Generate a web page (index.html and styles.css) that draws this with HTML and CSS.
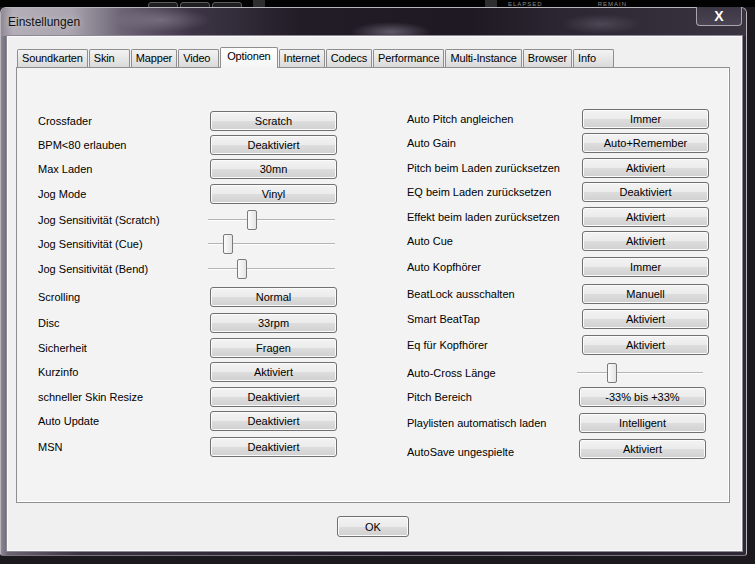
FILE: index.html
```html
<!DOCTYPE html>
<html>
  <head>
    <meta http-equiv="Content-Type" content="text/html; charset=UTF-8">
    <title>Einstellungen</title>
    <link rel="stylesheet" href="styles.css">
  </head>
  <body>

    <div class="desk-top">
      <div class="deck-btns"><span></span><span></span><span></span></div>
      <div class="deck-sep"></div>
      <div class="deck-sep deck-sep2"></div>
      <span class="deck-lbl">ELAPSED</span>
      <span class="deck-lbl deck-remain">REMAIN</span>
    </div>

    <div class="window">
      <div class="titlebar">
        <span class="title">Einstellungen</span>
        <span class="close">X</span>
      </div>

      <div class="client">
        <div class="tabs">
          <div class="tab">Soundkarten</div>
          <div class="tab">Skin</div>
          <div class="tab">Mapper</div>
          <div class="tab">Video</div>
          <div class="tab active">Optionen</div>
          <div class="tab">Internet</div>
          <div class="tab">Codecs</div>
          <div class="tab">Performance</div>
          <div class="tab">Multi-Instance</div>
          <div class="tab">Browser</div>
          <div class="tab">Info</div>
        </div>

        <div class="panel">
          <!-- linke Spalte -->
          <div class="col col-left">
            <div class="opt"><span class="lbl">Crossfader</span><button class="btn">Scratch</button></div>
            <div class="opt"><span class="lbl">BPM&lt;80 erlauben</span><button class="btn">Deaktiviert</button></div>
            <div class="opt"><span class="lbl">Max Laden</span><button class="btn">30mn</button></div>
            <div class="opt"><span class="lbl">Jog Mode</span><button class="btn">Vinyl</button></div>
            <div class="opt"><span class="lbl">Jog Sensitivität (Scratch)</span>
              <div class="slider"><span class="thumb" style="left: 39px"></span></div></div>
            <div class="opt"><span class="lbl">Jog Sensitivität (Cue)</span>
              <div class="slider"><span class="thumb" style="left: 15px"></span></div></div>
            <div class="opt"><span class="lbl">Jog Sensitivität (Bend)</span>
              <div class="slider"><span class="thumb" style="left: 29px"></span></div></div>
            <div class="opt"><span class="lbl">Scrolling</span><button class="btn">Normal</button></div>
            <div class="opt"><span class="lbl">Disc</span><button class="btn">33rpm</button></div>
            <div class="opt"><span class="lbl">Sicherheit</span><button class="btn">Fragen</button></div>
            <div class="opt"><span class="lbl">Kurzinfo</span><button class="btn">Aktiviert</button></div>
            <div class="opt"><span class="lbl">schneller Skin Resize</span><button class="btn">Deaktiviert</button></div>
            <div class="opt"><span class="lbl">Auto Update</span><button class="btn">Deaktiviert</button></div>
            <div class="opt"><span class="lbl">MSN</span><button class="btn">Deaktiviert</button></div>
          </div>

          <!-- rechte Spalte -->
          <div class="col col-right">
            <div class="opt"><span class="lbl">Auto Pitch angleichen</span><button class="btn">Immer</button></div>
            <div class="opt"><span class="lbl">Auto Gain</span><button class="btn">Auto+Remember</button></div>
            <div class="opt"><span class="lbl">Pitch beim Laden zurücksetzen</span><button class="btn">Aktiviert</button></div>
            <div class="opt"><span class="lbl">EQ beim Laden zurücksetzen</span><button class="btn">Deaktiviert</button></div>
            <div class="opt"><span class="lbl">Effekt beim laden zurücksetzen</span><button class="btn">Aktiviert</button></div>
            <div class="opt"><span class="lbl">Auto Cue</span><button class="btn">Aktiviert</button></div>
            <div class="opt"><span class="lbl">Auto Kopfhörer</span><button class="btn">Immer</button></div>
            <div class="opt"><span class="lbl">BeatLock ausschalten</span><button class="btn">Manuell</button></div>
            <div class="opt"><span class="lbl">Smart BeatTap</span><button class="btn">Aktiviert</button></div>
            <div class="opt"><span class="lbl">Eq für Kopfhörer</span><button class="btn">Aktiviert</button></div>
            <div class="opt"><span class="lbl">Auto-Cross Länge</span>
              <div class="slider slider-r"><span class="thumb" style="left: 30px"></span></div></div>
            <div class="opt"><span class="lbl">Pitch Bereich</span><button class="btn shift">-33% bis +33%</button></div>
            <div class="opt"><span class="lbl">Playlisten automatisch laden</span><button class="btn shift">Intelligent</button></div>
            <div class="opt"><span class="lbl lbl-low">AutoSave ungespielte</span><button class="btn shift">Aktiviert</button></div>
          </div>
        </div>

        <div class="footer">
          <button class="btn btn-ok">OK</button>
        </div>
      </div>
    </div>

  </body>
</html>
```

FILE: styles.css
```css
body {
  margin: 0;
  width: 755px;
  height: 564px;
  overflow: hidden;
  background: #1b191d;
  font-family: "Liberation Sans", Arial, sans-serif;
  font-size: 11px;
  color: #000;
}

/* Streifen der Anwendung hinter dem Fenster */
.desk-top {
  height: 7px;
  background: #030303;
  display: flex;
  overflow: hidden;
}

.deck-btns {
  display: flex;
  gap: 2px;
  margin-left: 148px;
}

.deck-btns span {
  width: 28px;
  height: 10px;
  margin-top: 2px;
  border: 1px solid #5c5c5c;
  border-radius: 3px;
  background: #1e1e1e;
}

.deck-sep {
  width: 12px;
  margin-left: 11px;
  background: #2e2e2e;
}

.deck-sep2 {
  margin-left: 220px;
}

.deck-lbl {
  margin-left: 11px;
  margin-top: 1px;
  color: #8a8a8a;
  font-size: 6px;
  line-height: 6px;
  letter-spacing: 1px;
}

.deck-remain {
  margin-left: 55px;
}

/* Fenster */
.window {
  width: 747px;
  height: 549px;
  box-sizing: border-box;
  border: 1px solid #b9b5bd;
  border-bottom-color: #7a7480;
  border-radius: 6px 6px 3px 3px;
  background: linear-gradient(90deg, #8d8693 0, #6b6371 7px, #3a3240 80px, #241e2a 400px, #2e2834 100%);
  display: flex;
  flex-direction: column;
}

.titlebar {
  height: 28px;
  display: flex;
  justify-content: space-between;
  align-items: flex-start;
  border-radius: 5px 5px 0 0;
  background:
    radial-gradient(ellipse 40px 10px at 390px 24px, rgba(150, 140, 160, .55), rgba(150, 140, 160, 0)),
    radial-gradient(ellipse 50px 12px at 160px 12px, rgba(150, 140, 160, .5), rgba(150, 140, 160, 0)),
    radial-gradient(ellipse 40px 10px at 600px 16px, rgba(120, 110, 130, .4), rgba(120, 110, 130, 0)),
    linear-gradient(90deg, #8f8995 0, #b3aeb7 12px, #a9a4ae 70px, #6d6575 120px, #3e3646 190px, #221c26 300px, #1f1923 470px, #2c2632 560px, #3a3440 100%);
}

.title {
  padding-left: 7px;
  font-size: 12px;
  line-height: 28px;
  color: #111;
  text-shadow: 0 0 6px rgba(255, 255, 255, .5);
}

.close {
  width: 46px;
  height: 19px;
  box-sizing: border-box;
  margin-top: -1px;
  margin-right: 4px;
  border: 1px solid #a9a4ae;
  border-top: none;
  border-radius: 0 0 4px 4px;
  background: linear-gradient(#3d3644, #4a4352);
  color: #fff;
  font-weight: bold;
  font-size: 14px;
  line-height: 19px;
  text-align: center;
}

.client {
  flex: 1;
  margin: 0 4px 4px 6px;
  padding: 11px 0 0 9px;
  background: #f0f0f0;
  box-shadow: inset 0 0 0 1px #fafafa, 0 0 0 1px #8e8896;
}

/* Reiter */
.tabs {
  display: flex;
  align-items: flex-end;
  height: 20px;
  padding-left: 1px;
}

.tab {
  height: 18px;
  min-width: 41px;
  box-sizing: border-box;
  padding: 0 4px;
  margin-right: 1px;
  border: 1px solid #8e8e8e;
  border-bottom: none;
  border-radius: 2px 2px 0 0;
  background: linear-gradient(#f3f3f3, #dadada);
  line-height: 17px;
  letter-spacing: -0.15px;
  white-space: nowrap;
}

.tab.active {
  height: 21px;
  margin-bottom: -1px;
  padding: 0 6px;
  position: relative;
  z-index: 1;
  background: linear-gradient(#ffffff, #f4f4f4);
}

.panel {
  width: 714px;
  height: 436px;
  box-sizing: border-box;
  border: 1px solid #8e8f8f;
  background: #f3f3f3;
  box-shadow: inset -1px -1px 0 #fff;
  display: flex;
}

.col {
  display: grid;
  align-content: start;
}

.col-left {
  width: 369px;
  margin-left: 21px;
  padding-top: 43px;
  grid-template-rows: 24px 24px 25px 26px 24px 25px 28px 26px 25px 24px 25px 24px 26px 20px;
}

.col-right {
  padding-top: 41px;
  grid-template-rows: 24px 25px 24px 25px 24px 26px 27px 25px 26px 28px 24px 26px 26px 20px;
}

.opt {
  display: flex;
  align-items: center;
  height: 20px;
}

.lbl {
  width: 172px;
  flex: none;
  white-space: nowrap;
}

.col-right .lbl {
  width: 175px;
}

.lbl-low {
  padding-top: 6px;
}

.btn {
  width: 127px;
  height: 20px;
  box-sizing: border-box;
  padding: 0;
  border: 1px solid #707070;
  border-radius: 3px;
  background: linear-gradient(#f3f3f3 0%, #ebebeb 50%, #dddddd 51%, #d0d0d0 100%);
  box-shadow: inset 0 0 0 1px #fbfbfb;
  font-family: "Liberation Sans", Arial, sans-serif;
  font-size: 11px;
  color: #000;
}

.btn.shift {
  margin-left: -3px;
}

/* Schieberegler */
.slider {
  position: relative;
  width: 127px;
  height: 20px;
  margin-left: -2px;
}

.slider::before {
  content: "";
  position: absolute;
  left: 0;
  right: 0;
  top: 9px;
  border-top: 1px solid #b4b4b4;
  border-bottom: 1px solid #fdfdfd;
}

.slider-r {
  width: 126px;
  margin-left: -5px;
}

.thumb {
  position: absolute;
  top: 0;
  width: 10px;
  height: 20px;
  box-sizing: border-box;
  border: 1px solid #7a7a7a;
  border-radius: 2px;
  background: linear-gradient(90deg, #fbfbfb, #e4e4e4);
}

.footer {
  width: 714px;
  display: flex;
  justify-content: center;
  padding-top: 13px;
}

.btn-ok {
  width: 72px;
  height: 21px;
}
```
